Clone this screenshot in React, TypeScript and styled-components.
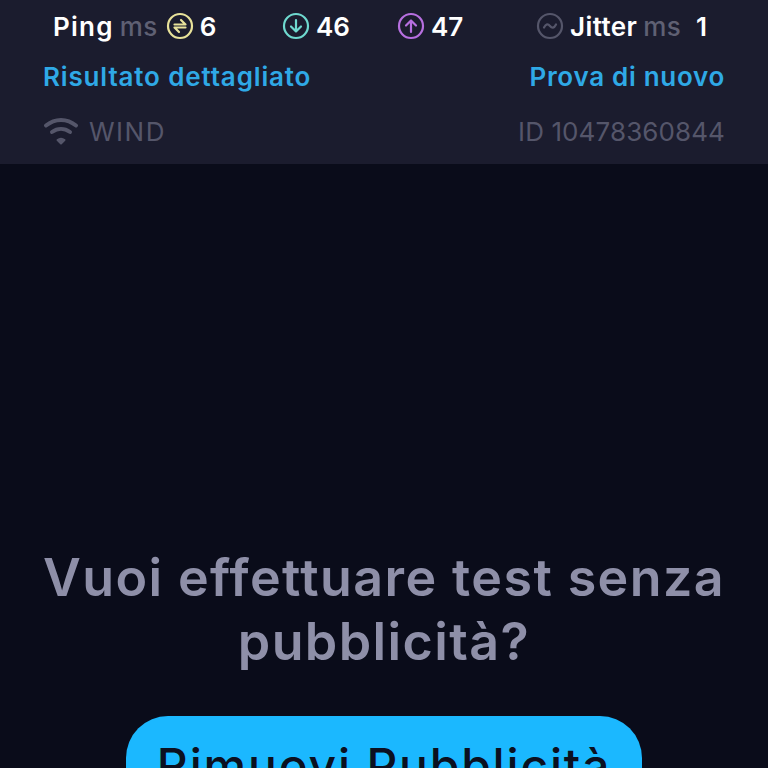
import * as React from "react";
import styled, { createGlobalStyle } from "styled-components";

const Global = createGlobalStyle`
  html, body {
    margin: 0;
    height: 768px;
    overflow: hidden;
    background: #0a0c1a;
  }
`;

const Page = styled.div`
  width: 768px;
  height: 768px;
  overflow: hidden;
  font-family: "Inter", "Open Sans", sans-serif;
`;

const Header = styled.header`
  height: 164px;
  box-sizing: border-box;
  background: #1b1c2e;
  padding: 8px 43px 0;
  display: grid;
  grid-template-rows: 36px 64px 46px;
`;

const Stats = styled.div`
  display: grid;
  grid-template-columns: 229px 115px 139px auto;
  padding-left: 10px;
  align-items: center;
`;

const Stat = styled.div`
  display: flex;
  align-items: center;
  font-size: 26px;
  font-weight: 600;
  color: #fff;
  white-space: nowrap;
`;

const Name = styled.span<{ $spacing: number }>`
  letter-spacing: ${(p) => p.$spacing}px;
`;

const Unit = styled.span`
  color: #5f6073;
  font-weight: 500;
  letter-spacing: 0.5px;
  margin-left: 6px;
  margin-right: 8px;
`;

const IconCircle = styled.svg`
  width: 28px;
  height: 28px;
  margin-right: 6px;
  flex: none;
`;

const Row = styled.div`
  display: flex;
  justify-content: space-between;
  align-items: center;
`;

const Link = styled.a<{ $spacing: number }>`
  color: #2fa9e6;
  font-size: 26px;
  font-weight: 600;
  letter-spacing: ${(p) => p.$spacing}px;
`;

const Muted = styled.div<{ $spacing: number }>`
  display: flex;
  align-items: center;
  gap: 10px;
  color: #55566a;
  font-size: 26px;
  font-weight: 400;
  letter-spacing: ${(p) => p.$spacing}px;
`;

const Main = styled.main`
  display: flex;
  flex-direction: column;
  align-items: center;
  padding-top: 382px;
`;

const Title = styled.h1`
  margin: 0;
  width: 720px;
  text-align: center;
  color: #8e8fa8;
  font-size: 52px;
  line-height: 64px;
  font-weight: 600;
  letter-spacing: 1.4px;
`;

const RemoveButton = styled.button`
  margin-top: 42px;
  width: 516px;
  height: 110px;
  flex: none;
  padding: 0 0 12px;
  border: 0;
  border-radius: 42px;
  background: #1bb8ff;
  color: #0b1020;
  font-family: inherit;
  font-size: 48px;
  font-weight: 500;
  letter-spacing: 1.8px;
  white-space: nowrap;
`;

const Ring = ({ color, children }: { color: string; children: React.ReactNode }) => (
  <IconCircle viewBox="0 0 28 28" fill="none" stroke={color} strokeWidth="2.2" strokeLinecap="round" strokeLinejoin="round">
    <circle cx="14" cy="14" r="12" />
    {children}
  </IconCircle>
);

const Wifi = () => (
  <svg width="36" height="30" viewBox="0 0 36 30" fill="none" stroke="#55566a" strokeWidth="4" strokeLinecap="round">
    <path d="M3 9.500C12 2 24 2 33 9.500" />
    <path d="M9 16C14.500 12 21.500 12 27 16" />
    <path d="M14.500 24L18 27.500L21.500 24C19.500 22.500 16.500 22.500 14.500 24Z" fill="#55566a" strokeWidth="2" strokeLinejoin="round" />
  </svg>
);

export default function App() {
  return (
    <Page>
      <Global />
      <Header>
        <Stats>
          <Stat>
            <Name $spacing={1.25}>Ping</Name>
            <Unit>ms</Unit>
            <Ring color="#e8e29a">
              <path d="M8.500 12.500H19.500L15 8" />
              <path d="M19.500 15.500H8.500L13 20" />
            </Ring>
            6
          </Stat>
          <Stat>
            <Ring color="#6fd9cf">
              <path d="M14 8V19.500M9 14.500L14 19.500L19 14.500" />
            </Ring>
            46
          </Stat>
          <Stat>
            <Ring color="#b76fe0">
              <path d="M14 20V8.500M9 13.500L14 8.500L19 13.500" />
            </Ring>
            47
          </Stat>
          <Stat>
            <Ring color="#55566a">
              <path d="M8 15.500C10 11.500 12 11.500 14 14C16 16.500 18 16.500 20 12.500" />
            </Ring>
            <Name $spacing={0.4}>Jitter</Name>
            <Unit>ms</Unit>&nbsp;1
          </Stat>
        </Stats>
        <Row>
          <Link $spacing={0.85}>Risultato dettagliato</Link>
          <Link $spacing={0.7}>Prova di nuovo</Link>
        </Row>
        <Row>
          <Muted $spacing={1.5}>
            <Wifi />
            WIND
          </Muted>
          <Muted $spacing={0.1}>ID 10478360844</Muted>
        </Row>
      </Header>
      <Main>
        <Title>Vuoi effettuare test senza pubblicità?</Title>
        <RemoveButton>Rimuovi Pubblicità</RemoveButton>
      </Main>
    </Page>
  );
}
